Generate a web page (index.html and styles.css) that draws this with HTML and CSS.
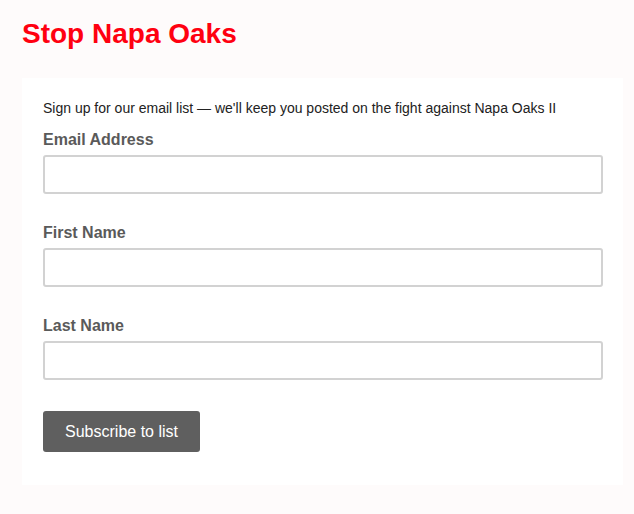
FILE: index.html
```html
<!DOCTYPE html>
<html lang="en">
<head>
    <meta charset="UTF-8">
    <meta name="viewport" content="width=device-width, initial-scale=1.0">
    <title>Stop Napa Oaks</title>
    <link rel="stylesheet" href="styles.css">
</head>
<body>
<div class="page">
    <h1 class="site_title">Stop Napa Oaks</h1>

    <form class="signup">
        <p class="intro">Sign up for our email list — we'll keep you posted on the fight against Napa Oaks II</p>

        <div class="field">
            <label for="email">Email Address</label>
            <input type="email" id="email">
        </div>
        <div class="field">
            <label for="firstName">First Name</label>
            <input type="text" id="firstName">
        </div>
        <div class="field">
            <label for="lastName">Last Name</label>
            <input type="text" id="lastName">
        </div>

        <button type="button" class="button_subscribe">Subscribe to list</button>
    </form>
</div>
</body>
</html>
```

FILE: styles.css
```css
body {
    font-family: "Liberation Sans", Arial, sans-serif;
    margin: 0;
    padding: 0;
    background-color: #fefbfb;
}

.page {
    padding: 18px 0 0 22px;
}

.site_title {
    margin: 0;
    font-size: 28px;
    line-height: 32px;
    font-weight: bold;
    color: #ff0010;
}

.signup {
    width: 601px;
    margin-top: 28px;
    padding: 21px 0 33px 0;
    box-sizing: border-box;
    background-color: #fff;
}

.intro {
    margin: 0 0 12px 21px;
    font-size: 14px;
    line-height: 18px;
    color: #222;
}

.field {
    margin: 0 0 28px 21px;
}

.field label {
    display: block;
    padding-top: 1px;
    margin-bottom: 5px;
    font-size: 16px;
    line-height: 20px;
    font-weight: bold;
    color: #5a5a5a;
}

.field input {
    display: block;
    width: 560px;
    height: 39px;
    box-sizing: border-box;
    margin: 0;
    border: 2px solid #d2d2d2;
    border-radius: 3px;
    background-color: #fff;
    font-size: 16px;
}

.button_subscribe {
    display: block;
    margin: 31px 0 0 21px;
    width: 157px;
    height: 41px;
    padding: 0;
    border: none;
    border-radius: 3px;
    background-color: #5f5f5f;
    color: #fff;
    font-family: "Liberation Sans", Arial, sans-serif;
    font-size: 16px;
}
```
